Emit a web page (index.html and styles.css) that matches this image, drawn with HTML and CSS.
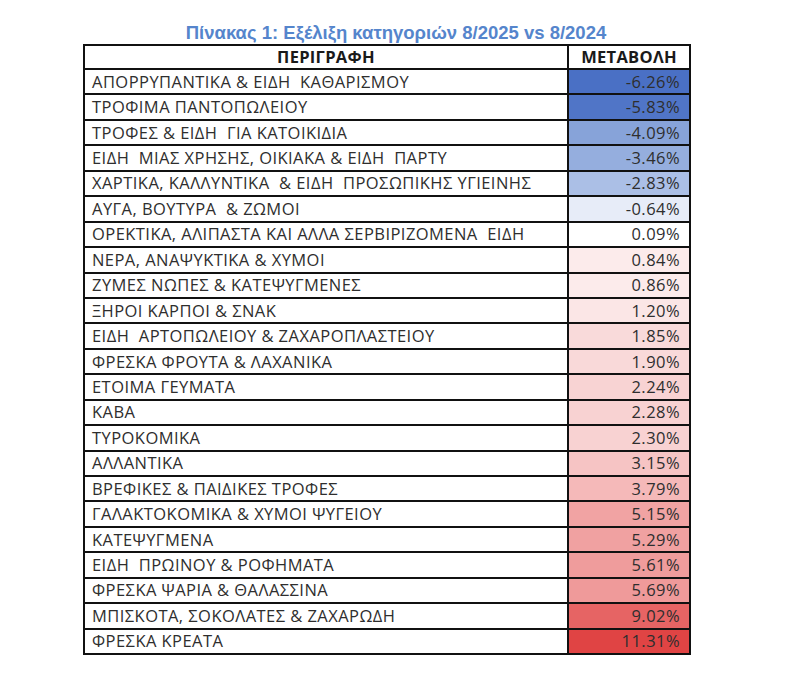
FILE: index.html
```html
<!DOCTYPE html>
<html lang="el">
<head>
<meta charset="utf-8">
<link rel="stylesheet" href="styles.css">
</head>
<body>
<div class="page">
  <h1 class="title">Πίνακας 1: Εξέλιξη κατηγοριών 8/2025 vs 8/2024</h1>
  <table class="tbl">
    <colgroup><col class="c-desc"><col class="c-val"></colgroup>
    <thead>
      <tr><th>ΠΕΡΙΓΡΑΦΗ</th><th>ΜΕΤΑΒΟΛΗ</th></tr>
    </thead>
    <tbody>
      <tr><td>ΑΠΟΡΡΥΠΑΝΤΙΚΑ &amp; ΕΙΔΗ  ΚΑΘΑΡΙΣΜΟΥ</td><td class="v" style="background:#4a70c5">-6.26%</td></tr>
      <tr><td>ΤΡΟΦΙΜΑ ΠΑΝΤΟΠΩΛΕΙΟΥ</td><td class="v" style="background:#5075c7">-5.83%</td></tr>
      <tr><td>ΤΡΟΦΕΣ &amp; ΕΙΔΗ  ΓΙΑ ΚΑΤΟΙΚΙΔΙΑ</td><td class="v" style="background:#87a3d9">-4.09%</td></tr>
      <tr><td>ΕΙΔΗ  ΜΙΑΣ ΧΡΗΣΗΣ, ΟΙΚΙΑΚΑ &amp; ΕΙΔΗ  ΠΑΡΤΥ</td><td class="v" style="background:#95aede">-3.46%</td></tr>
      <tr><td>ΧΑΡΤΙΚΑ, ΚΑΛΛΥΝΤΙΚΑ  &amp; ΕΙΔΗ  ΠΡΟΣΩΠΙΚΗΣ ΥΓΙΕΙΝΗΣ</td><td class="v" style="background:#abbfe6">-2.83%</td></tr>
      <tr><td>ΑΥΓΑ, ΒΟΥΤΥΡΑ  &amp; ΖΩΜΟΙ</td><td class="v" style="background:#e7ecf8">-0.64%</td></tr>
      <tr><td>ΟΡΕΚΤΙΚΑ, ΑΛΙΠΑΣΤΑ ΚΑΙ ΑΛΛΑ ΣΕΡΒΙΡΙΖΟΜΕΝΑ  ΕΙΔΗ</td><td class="v" style="background:#ffffff">0.09%</td></tr>
      <tr><td>ΝΕΡΑ, ΑΝΑΨΥΚΤΙΚΑ &amp; ΧΥΜΟΙ</td><td class="v" style="background:#fcebeb">0.84%</td></tr>
      <tr><td>ΖΥΜΕΣ ΝΩΠΕΣ &amp; ΚΑΤΕΨΥΓΜΕΝΕΣ</td><td class="v" style="background:#fcebeb">0.86%</td></tr>
      <tr><td>ΞΗΡΟΙ ΚΑΡΠΟΙ &amp; ΣΝΑΚ</td><td class="v" style="background:#fbe6e6">1.20%</td></tr>
      <tr><td>ΕΙΔΗ  ΑΡΤΟΠΩΛΕΙΟΥ &amp; ΖΑΧΑΡΟΠΛΑΣΤΕΙΟΥ</td><td class="v" style="background:#f9dada">1.85%</td></tr>
      <tr><td>ΦΡΕΣΚΑ ΦΡΟΥΤΑ &amp; ΛΑΧΑΝΙΚΑ</td><td class="v" style="background:#f9d9d9">1.90%</td></tr>
      <tr><td>ΕΤΟΙΜΑ ΓΕΥΜΑΤΑ</td><td class="v" style="background:#f8d3d3">2.24%</td></tr>
      <tr><td>ΚΑΒΑ</td><td class="v" style="background:#f8d2d2">2.28%</td></tr>
      <tr><td>ΤΥΡΟΚΟΜΙΚΑ</td><td class="v" style="background:#f8d2d2">2.30%</td></tr>
      <tr><td>ΑΛΛΑΝΤΙΚΑ</td><td class="v" style="background:#f6c4c4">3.15%</td></tr>
      <tr><td>ΒΡΕΦΙΚΕΣ &amp; ΠΑΙΔΙΚΕΣ ΤΡΟΦΕΣ</td><td class="v" style="background:#f5b9b9">3.79%</td></tr>
      <tr><td>ΓΑΛΑΚΤΟΚΟΜΙΚΑ &amp; ΧΥΜΟΙ ΨΥΓΕΙΟΥ</td><td class="v" style="background:#f1a3a3">5.15%</td></tr>
      <tr><td>ΚΑΤΕΨΥΓΜΕΝΑ</td><td class="v" style="background:#f0a1a1">5.29%</td></tr>
      <tr><td>ΕΙΔΗ  ΠΡΩΙΝΟΥ &amp; ΡΟΦΗΜΑΤΑ</td><td class="v" style="background:#ef9c9c">5.61%</td></tr>
      <tr><td>ΦΡΕΣΚΑ ΨΑΡΙΑ &amp; ΘΑΛΑΣΣΙΝΑ</td><td class="v" style="background:#ef9a9a">5.69%</td></tr>
      <tr><td>ΜΠΙΣΚΟΤΑ, ΣΟΚΟΛΑΤΕΣ &amp; ΖΑΧΑΡΩΔΗ</td><td class="v" style="background:#e66464">9.02%</td></tr>
      <tr><td>ΦΡΕΣΚΑ ΚΡΕΑΤΑ</td><td class="v" style="background:#e04444">11.31%</td></tr>
    </tbody>
  </table>
</div>
</body>
</html>
```

FILE: styles.css
```css
html, body {
  margin: 0;
  padding: 0;
  background: #ffffff;
}

.page {
  width: 792px;
  padding-top: 22px;
}

.title {
  margin: 0;
  font-family: "Liberation Sans", Arial, sans-serif;
  font-weight: bold;
  font-size: 18.5px;
  line-height: 22px;
  color: #5585cc;
  text-align: center;
  padding-left: 0;
}

.tbl {
  margin-left: 83px;
  border-collapse: collapse;
  border: 2px solid #111;
  font-family: "Open Sans", "Noto Sans", sans-serif;
  font-size: 16.5px;
  letter-spacing: 0.45px;
  color: #2e2e2e;
  table-layout: fixed;
  width: 606px;
}

.c-desc { width: 484px; }
.c-val { width: 122px; }

.tbl th, .tbl td {
  border: 2px solid #111;
  padding: 0 7px;
  white-space: pre;
  line-height: 18px;
}

.tbl th {
  height: 22px;
  font-weight: bold;
  text-align: center;
  color: #1a1a1a;
  letter-spacing: 0.3px;
}

.tbl td {
  height: 23.45px;
  text-align: left;
}

.tbl td.v {
  text-align: right;
  padding-right: 9px;
}
```
